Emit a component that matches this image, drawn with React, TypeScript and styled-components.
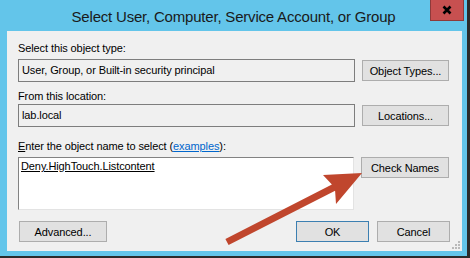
import React from "react";
import styled, { createGlobalStyle } from "styled-components";

const GlobalStyle = createGlobalStyle`
  html, body {
    margin: 0;
    padding: 0;
    background: #ffffff;
  }
  body {
    font-family: "Liberation Sans", Arial, sans-serif;
  }
`;

// Outer window frame (blue chrome)
const Window = styled.div`
  position: relative;
  width: 470px;
  height: 258px;
  box-sizing: border-box;
  background: #63c5ea;
  border-right: 3px solid #2b2b2b;
  border-bottom: 2px solid #2b2b2b;
  display: flex;
  flex-direction: column;
  overflow: hidden;
`;

const TitleBar = styled.div`
  position: relative;
  height: 31px;
  display: flex;
  align-items: center;
  justify-content: center;
  flex-shrink: 0;
`;

const Title = styled.div`
  font-family: "Liberation Sans", Arial, sans-serif;
  font-size: 15px;
  letter-spacing: -0.2px;
  color: #1a1a1a;
  margin-top: 1px;
`;

const CloseButton = styled.div`
  position: absolute;
  top: -1px;
  right: 3px;
  width: 34px;
  height: 22px;
  box-sizing: border-box;
  background: #c75050;
  border: 1px solid #8e3a3a;
  display: flex;
  align-items: center;
  justify-content: center;
`;

const Client = styled.div`
  position: relative;
  margin: 0 5px 6px 7px;
  flex: 1;
  background: #f0f0f0;
  padding: 10px 12px 9px 11px;
  display: flex;
  flex-direction: column;
  font-size: 11px;
  letter-spacing: -0.1px;
  color: #000;
`;

const Label = styled.div<{ $top?: number; $bottom?: number }>`
  height: 15px;
  line-height: 15px;
  margin-top: ${(p) => p.$top ?? 0}px;
  margin-bottom: ${(p) => p.$bottom ?? 0}px;
  white-space: nowrap;
`;

const Row = styled.div<{ $align?: string }>`
  display: flex;
  align-items: ${(p) => p.$align ?? "center"};
  gap: 7px;
`;

const Field = styled.div`
  width: 337px;
  height: 23px;
  box-sizing: border-box;
  border: 1px solid #7d7d7d;
  background: #f0f0f0;
  padding: 0 3px;
  line-height: 21px;
  white-space: nowrap;
`;

const NameBox = styled.div`
  width: 336px;
  height: 53px;
  box-sizing: border-box;
  background: #ffffff;
  border: 1px solid;
  border-color: #828282 #e3e3e3 #e3e3e3 #828282;
  padding: 1px 2px;
  line-height: 15px;
`;

const ResolvedName = styled.span`
  text-decoration: underline;
  text-underline-offset: 1px;
`;

const Button = styled.div<{ $width?: number; $default?: boolean }>`
  width: ${(p) => p.$width ?? 87}px;
  height: 21px;
  box-sizing: border-box;
  background: #e1e1e1;
  border: 1px solid ${(p) => (p.$default ? "#3c7fb1" : "#adadad")};
  display: flex;
  align-items: center;
  justify-content: center;
  white-space: nowrap;
  flex-shrink: 0;
`;

const Accel = styled.span`
  text-decoration: underline;
`;

const Link = styled.span`
  color: #0066cc;
  text-decoration: underline;
`;

const Footer = styled.div`
  display: flex;
  align-items: center;
  margin-top: 11px;
  padding-left: 1px;
`;

const Spacer = styled.div`
  flex: 1;
`;

const FooterRight = styled.div`
  display: flex;
  gap: 8px;
`;

const Grip = styled.svg`
  position: absolute;
  right: 2px;
  bottom: 2px;
`;

const ArrowLayer = styled.svg`
  position: absolute;
  left: 0;
  top: 0;
  pointer-events: none;
`;

export default function App() {
  return (
    <>
      <GlobalStyle />
      <Window>
        <TitleBar>
          <Title>Select User, Computer, Service Account, or Group</Title>
          <CloseButton>
            <svg width="10" height="10" viewBox="0 0 10 10">
              <path d="M1.5 1.5 L8.5 8.5 M8.5 1.5 L1.5 8.5" stroke="#000" strokeWidth="2.6" />
            </svg>
          </CloseButton>
        </TitleBar>
        <Client>
          <Label $bottom={3}>Select this object type:</Label>
          <Row>
            <Field>User, Group, or Built-in security principal</Field>
            <Button>Object Types...</Button>
          </Row>
          <Label $top={7}>From this location:</Label>
          <Row>
            <Field>lab.local</Field>
            <Button>Locations...</Button>
          </Row>
          <Label $top={12} $bottom={3}>
            <Accel>E</Accel>nter the object name to select (<Link>examples</Link>):
          </Label>
          <Row $align="flex-start">
            <NameBox>
              <ResolvedName>Deny.HighTouch.Listcontent</ResolvedName>
            </NameBox>
            <Button $width={88}>Check Names</Button>
          </Row>
          <Footer>
            <Button $width={88}>Advanced...</Button>
            <Spacer />
            <FooterRight>
              <Button $width={73} $default>OK</Button>
              <Button $width={73}>Cancel</Button>
            </FooterRight>
          </Footer>
          <Grip width="8" height="8" viewBox="0 0 8 8">
            <rect x="6" y="0" width="2" height="2" fill="#b9b9b9" />
            <rect x="3" y="3" width="2" height="2" fill="#b9b9b9" />
            <rect x="6" y="3" width="2" height="2" fill="#b9b9b9" />
            <rect x="0" y="6" width="2" height="2" fill="#b9b9b9" />
            <rect x="3" y="6" width="2" height="2" fill="#b9b9b9" />
            <rect x="6" y="6" width="2" height="2" fill="#b9b9b9" />
          </Grip>
        </Client>
        <ArrowLayer width="470" height="258" viewBox="0 0 470 258">
          <polygon
            points="225.4,238.9 331.9,184.5 323,175 362,173 336,204 335.1,190.7 228.6,245.1"
            fill="#c0462d"
          />
        </ArrowLayer>
      </Window>
    </>
  );
}
